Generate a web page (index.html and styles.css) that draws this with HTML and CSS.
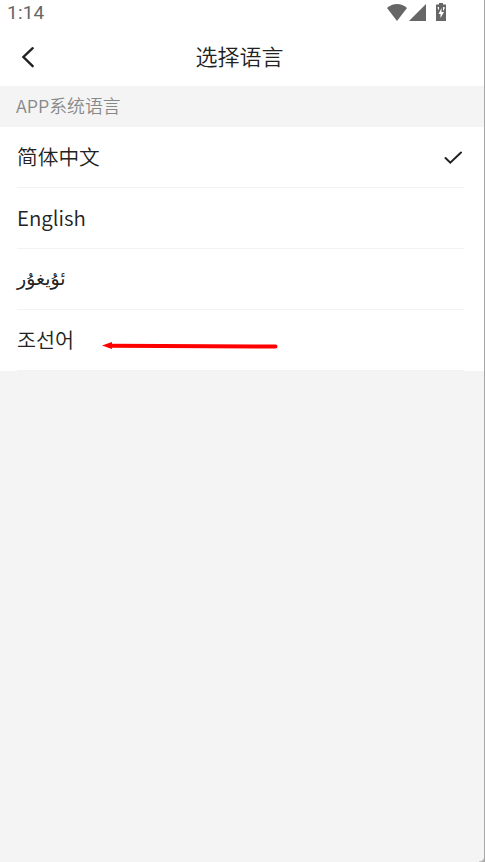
FILE: index.html
```html
<!DOCTYPE html>
<html lang="zh-CN">
<head>
  <meta charset="UTF-8">
  <meta name="viewport" content="width=device-width, initial-scale=1">
  <title>选择语言</title>
  <link rel="stylesheet" href="styles.css">
</head>
<body>
  <div class="screen">
    <div class="status-bar">
      <span class="time">1:14</span>
      <div class="status-icons">
        <svg class="wifi" width="20" height="17" viewBox="0 0 20 17">
          <path d="M0 4Q4.500 0 10 0T20 4L10 17Z"/>
        </svg>
        <svg class="signal" width="17" height="17" viewBox="0 0 17 17">
          <path d="M17 0V17H0Z"/>
        </svg>
        <svg class="battery" width="10" height="18" viewBox="0 0 10 18">
          <path d="M3 0H7V1.500H10V18H0V1.500H3Z"/>
          <path class="bolt" d="M1.500 4H3V7L2 6ZM7 4H8.500V6L7 8ZM5.500 5V9H8L4.500 15V11H2.500Z"/>
        </svg>
      </div>
    </div>

    <header class="header">
      <button class="back" type="button" aria-label="返回">
        <svg width="14" height="22" viewBox="0 0 14 22">
          <path d="M11.700 2.200L2.400 11L11.700 20.200"/>
        </svg>
      </button>
      <h1>选择语言</h1>
    </header>

    <div class="section-title">APP系统语言</div>

    <ul class="languages">
      <li>
        <span>简体中文</span>
        <svg class="check" width="20" height="16" viewBox="0 0 20 16">
          <path d="M2.500 8L7.300 12.700L18 2.500"/>
        </svg>
      </li>
      <li><span class="english">English</span></li>
      <li><span class="uyghur" lang="ug" dir="rtl">ئۇيغۇر</span></li>
      <li class="korean-row">
        <span class="korean" lang="ko">조선어</span>
        <svg class="arrow" width="177" height="10" viewBox="0 0 177 10">
          <path class="shaft" d="M8 4.800L60 4.900L173.500 5.500"/>
          <path class="head" d="M0 4.500L10 1V8Z"/>
        </svg>
      </li>
    </ul>
    <div class="corner"></div>
  </div>
</body>
</html>
```

FILE: styles.css
```css
* {
  box-sizing: border-box;
}

body {
  margin: 0;
  background: #f4f4f4;
  color: #222;
  font-family: Roboto, "Noto Sans CJK SC", sans-serif;
}

.screen {
  position: relative;
  height: 862px;
  overflow: hidden;
  border-right: 1px solid #a6a6a6;
}

.status-bar {
  display: flex;
  justify-content: space-between;
  height: 28px;
  padding: 0 38px 0 7px;
  background: #fff;
  color: #666;
}

.time {
  font-size: 19px;
  line-height: 26px;
  letter-spacing: 0.2px;
}

.status-icons {
  display: flex;
  align-items: flex-start;
  padding-top: 3px;
  fill: #666;
}

.wifi {
  margin: 1px 2px 0 0;
}

.signal {
  margin: 1px 10px 0 0;
}

.bolt {
  fill: #fff;
}

.header {
  display: grid;
  grid-template-columns: 60px 1fr 60px;
  align-items: center;
  height: 58px;
  padding-right: 5px;
  background: #fff;
}

.back {
  display: flex;
  margin: 0;
  padding: 0 0 0 21px;
  border: 0;
  background: none;
}

.back path,
.check path {
  fill: none;
  stroke: #222;
  stroke-width: 2.4;
  stroke-linecap: round;
}

.check path {
  stroke-width: 2;
}

.header h1 {
  margin: 0;
  padding-top: 1px;
  font-size: 22px;
  font-weight: 350;
  line-height: 30px;
  text-align: center;
}

.section-title {
  height: 41px;
  padding-left: 16px;
  color: #888;
  font-family: "Noto Sans CJK SC", sans-serif;
  font-size: 17.9px;
  font-weight: 350;
  line-height: 39px;
}

.languages {
  margin: 0;
  padding: 0 20px 0 17px;
  background: #fff;
  list-style: none;
}

.languages li {
  display: flex;
  align-items: center;
  justify-content: space-between;
  height: 61px;
  padding-bottom: 2px;
  border-bottom: 1px solid #f3f3f3;
  font-size: 20.7px;
  font-weight: 350;
}

.check {
  margin: 4px 1px 0 0;
}

.english {
  font-family: "Noto Sans CJK SC", sans-serif;
  font-size: 20.5px;
}

.uyghur {
  font-family: "DejaVu Sans", sans-serif;
  font-size: 19px;
  font-weight: 400;
}

.korean {
  font-family: "Noto Sans CJK KR", sans-serif;
}

.languages .korean-row {
  justify-content: flex-start;
}

.arrow {
  margin: 14px 0 0 28px;
}

.shaft {
  fill: none;
  stroke: #f00;
  stroke-width: 4;
  stroke-linecap: round;
}

.head {
  fill: #f00;
}

/* rounded corner of the device frame */
.corner {
  position: absolute;
  right: 0;
  bottom: 0;
  width: 5px;
  height: 6px;
  background: radial-gradient(circle at 0 0, transparent 5px, #b0b0b0 6px);
}
```
